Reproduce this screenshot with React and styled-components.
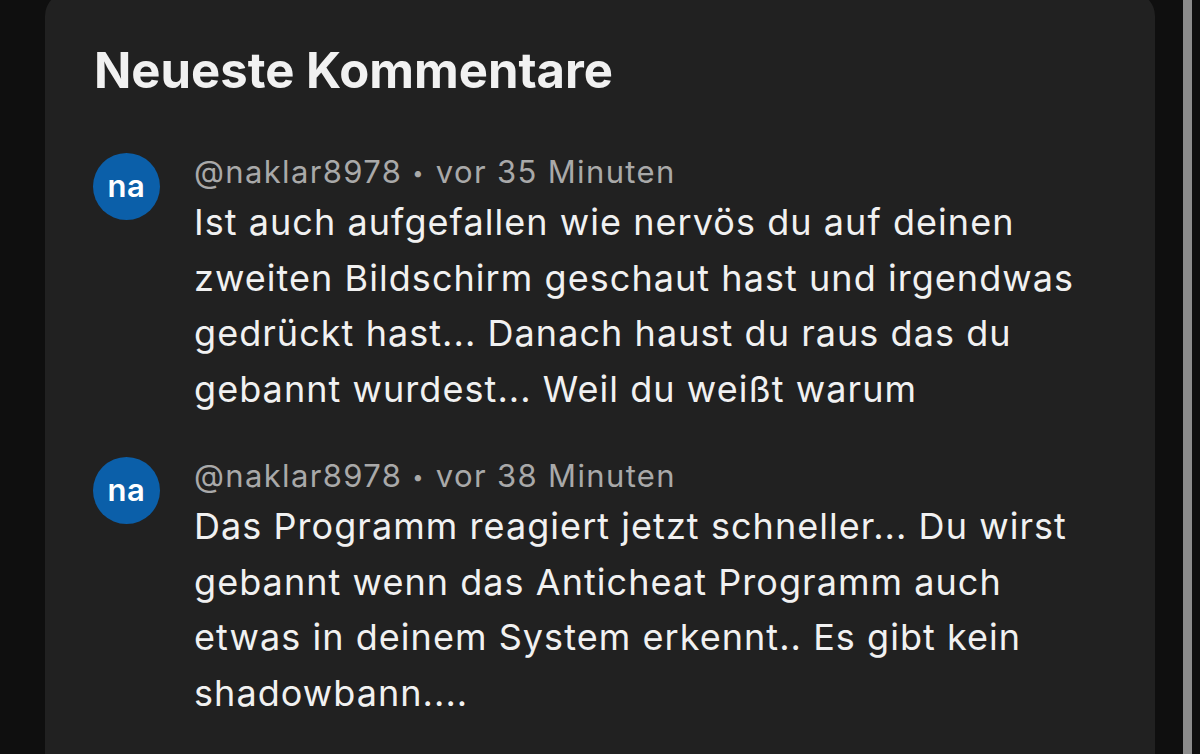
import React from 'react'
import styled, { createGlobalStyle } from 'styled-components'

const comments = [
  {
    user: '@naklar8978',
    time: 'vor 35 Minuten',
    text: 'Ist auch aufgefallen wie nervös du auf deinen\nzweiten Bildschirm geschaut hast und irgendwas\ngedrückt hast... Danach haust du raus das du\ngebannt wurdest... Weil du weißt warum',
  },
  {
    user: '@naklar8978',
    time: 'vor 38 Minuten',
    text: 'Das Programm reagiert jetzt schneller... Du wirst\ngebannt wenn das Anticheat Programm auch\netwas in deinem System erkennt.. Es gibt kein\nshadowbann....',
  },
]

function App() {
  return (
    <>
      <GlobalStyle />
      <Page>
        <Card>
          <Title>Neueste Kommentare</Title>
          <List>
            {comments.map((c, i) => (
              <Comment key={i}>
                <Avatar>na</Avatar>
                <Body>
                  <Meta>
                    {c.user}
                    <Dot>•</Dot>
                    {c.time}
                  </Meta>
                  <Text>{c.text}</Text>
                </Body>
              </Comment>
            ))}
          </List>
        </Card>
        <Edge />
      </Page>
    </>
  )
}

export default App

const GlobalStyle = createGlobalStyle`
  html, body {
    margin: 0;
    background: #0f0f0f;
    overflow: hidden;
  }
  body {
    font-family: Inter, "Noto Sans", sans-serif;
  }
`

const Page = styled.div`
  display: flex;
  height: 754px;
  padding-left: 45px;
  overflow: hidden;
`

const Card = styled.div`
  width: 1110px;
  margin-top: -8px;
  height: 800px;
  box-sizing: border-box;
  padding: 50px 40px 0 48px;
  background: #212121;
  border-radius: 24px 24px 0 0;
`

const Edge = styled.div`
  width: 9px;
  margin-left: 28px;
  background: #8c8c8c;
`

const Title = styled.h1`
  margin: 0 0 50px 1px;
  font-size: 49px;
  line-height: 58px;
  font-weight: 700;
  color: #f1f1f1;
  letter-spacing: 0;
`

const List = styled.div`
  display: flex;
  flex-direction: column;
  gap: 37px;
`

const Comment = styled.div`
  display: flex;
  align-items: flex-start;
`

const Avatar = styled.div`
  flex: none;
  width: 67px;
  height: 67px;
  margin-top: 3px;
  border-radius: 50%;
  background: #0b5fa9;
  color: #fff;
  display: flex;
  align-items: center;
  justify-content: center;
  font-size: 31px;
  font-weight: 600;
  letter-spacing: 0.5px;
  padding-bottom: 3px;
  box-sizing: border-box;
`

const Body = styled.div`
  margin-left: 34px;
  min-width: 0;
`

const Meta = styled.div`
  font-size: 31px;
  line-height: 43px;
  color: #a9a9a9;
  letter-spacing: 1.35px;
  white-space: nowrap;
`

const Dot = styled.span`
  margin: 0 11px 0 10px;
  font-size: 20px;
  vertical-align: 3px;
`

const Text = styled.div`
  font-size: 36px;
  line-height: 55.5px;
  color: #f1f1f1;
  letter-spacing: 1.05px;
  white-space: pre-line;
`
